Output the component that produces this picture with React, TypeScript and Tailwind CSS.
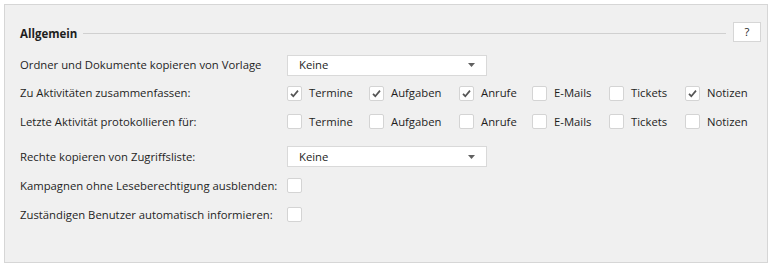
import React from "react";

const font = { fontFamily: '"Segoe UI", "Open Sans", "Noto Sans", sans-serif' };

function Check({ checked }: { checked?: boolean }) {
  return (
    <div className="w-[15px] h-[15px] shrink-0 bg-white border border-[#d4d4d4] rounded-[2px] flex items-center justify-center">
      {checked && (
        <svg width="11" height="11" viewBox="0 0 11 11">
          <path d="M2 5.8 L4.3 8.2 L9 2.6" stroke="#555" strokeWidth="1.7" fill="none" />
        </svg>
      )}
    </div>
  );
}

function Select() {
  return (
    <div className="w-[200px] h-[21px] bg-white border border-[#d9d9d9] flex items-center pl-[11px] pr-[11px] justify-between">
      <span>Keine</span>
      <svg width="7" height="4" viewBox="0 0 7 4">
        <path d="M0 0 H7 L3.5 4 Z" fill="#606060" />
      </svg>
    </div>
  );
}

const items = ["Termine", "Aufgaben", "Anrufe", "E-Mails", "Tickets", "Notizen"];
const widths = ["w-[82px]", "w-[90px]", "w-[73px]", "w-[77px]", "w-[76px]", "w-[70px]"];

function CheckRow({ checked }: { checked: boolean[] }) {
  return (
    <div className="flex items-center">
      {items.map((it, i) => (
        <div key={it} className={`flex items-center gap-[7px] ${widths[i]}`}>
          <Check checked={checked[i]} />
          <span>{it}</span>
        </div>
      ))}
    </div>
  );
}

function Row({ label, children, h }: { label: string; children?: React.ReactNode; h: string }) {
  return (
    <div className={`flex items-center ${h}`}>
      <div className="w-[267px] shrink-0 whitespace-nowrap">{label}</div>
      <div>{children}</div>
    </div>
  );
}

export default function App() {
  return (
    <div className="w-[772px] h-[266px] bg-white pt-[4px] pl-[4px]" style={font}>
      <div className="w-[764px] h-[259px] bg-[#f0f0f0] border border-[#d6d6d6] pl-[15px] pr-[6px] pt-[17px] text-[11.3px] text-[#1e1e1e] leading-none">
        <div className="flex items-center h-[20px]">
          <span className="font-bold text-[11.5px] mr-[6px] mt-[3px]">Allgemein</span>
          <div className="flex-1 h-px bg-[#d0d0d0] mt-[2px]" />
          <div className="ml-[7px] w-[28px] h-[20px] bg-white border border-[#d6d6d6] flex items-center justify-center">?</div>
        </div>
        <div className="mt-[9px]">
          <Row label="Ordner und Dokumente kopieren von Vorlage" h="h-[28px]">
            <Select />
          </Row>
          <Row label="Zu Aktivitäten zusammenfassen:" h="h-[28px]">
            <CheckRow checked={[true, true, true, false, false, true]} />
          </Row>
          <Row label="Letzte Aktivität protokollieren für:" h="h-[29px]">
            <CheckRow checked={[false, false, false, false, false, false]} />
          </Row>
          <div className="h-[6px]" />
          <Row label="Rechte kopieren von Zugriffsliste:" h="h-[29px]">
            <Select />
          </Row>
          <Row label="Kampagnen ohne Leseberechtigung ausblenden:" h="h-[29px]">
            <Check />
          </Row>
          <Row label="Zuständigen Benutzer automatisch informieren:" h="h-[29px]">
            <Check />
          </Row>
        </div>
      </div>
    </div>
  );
}
